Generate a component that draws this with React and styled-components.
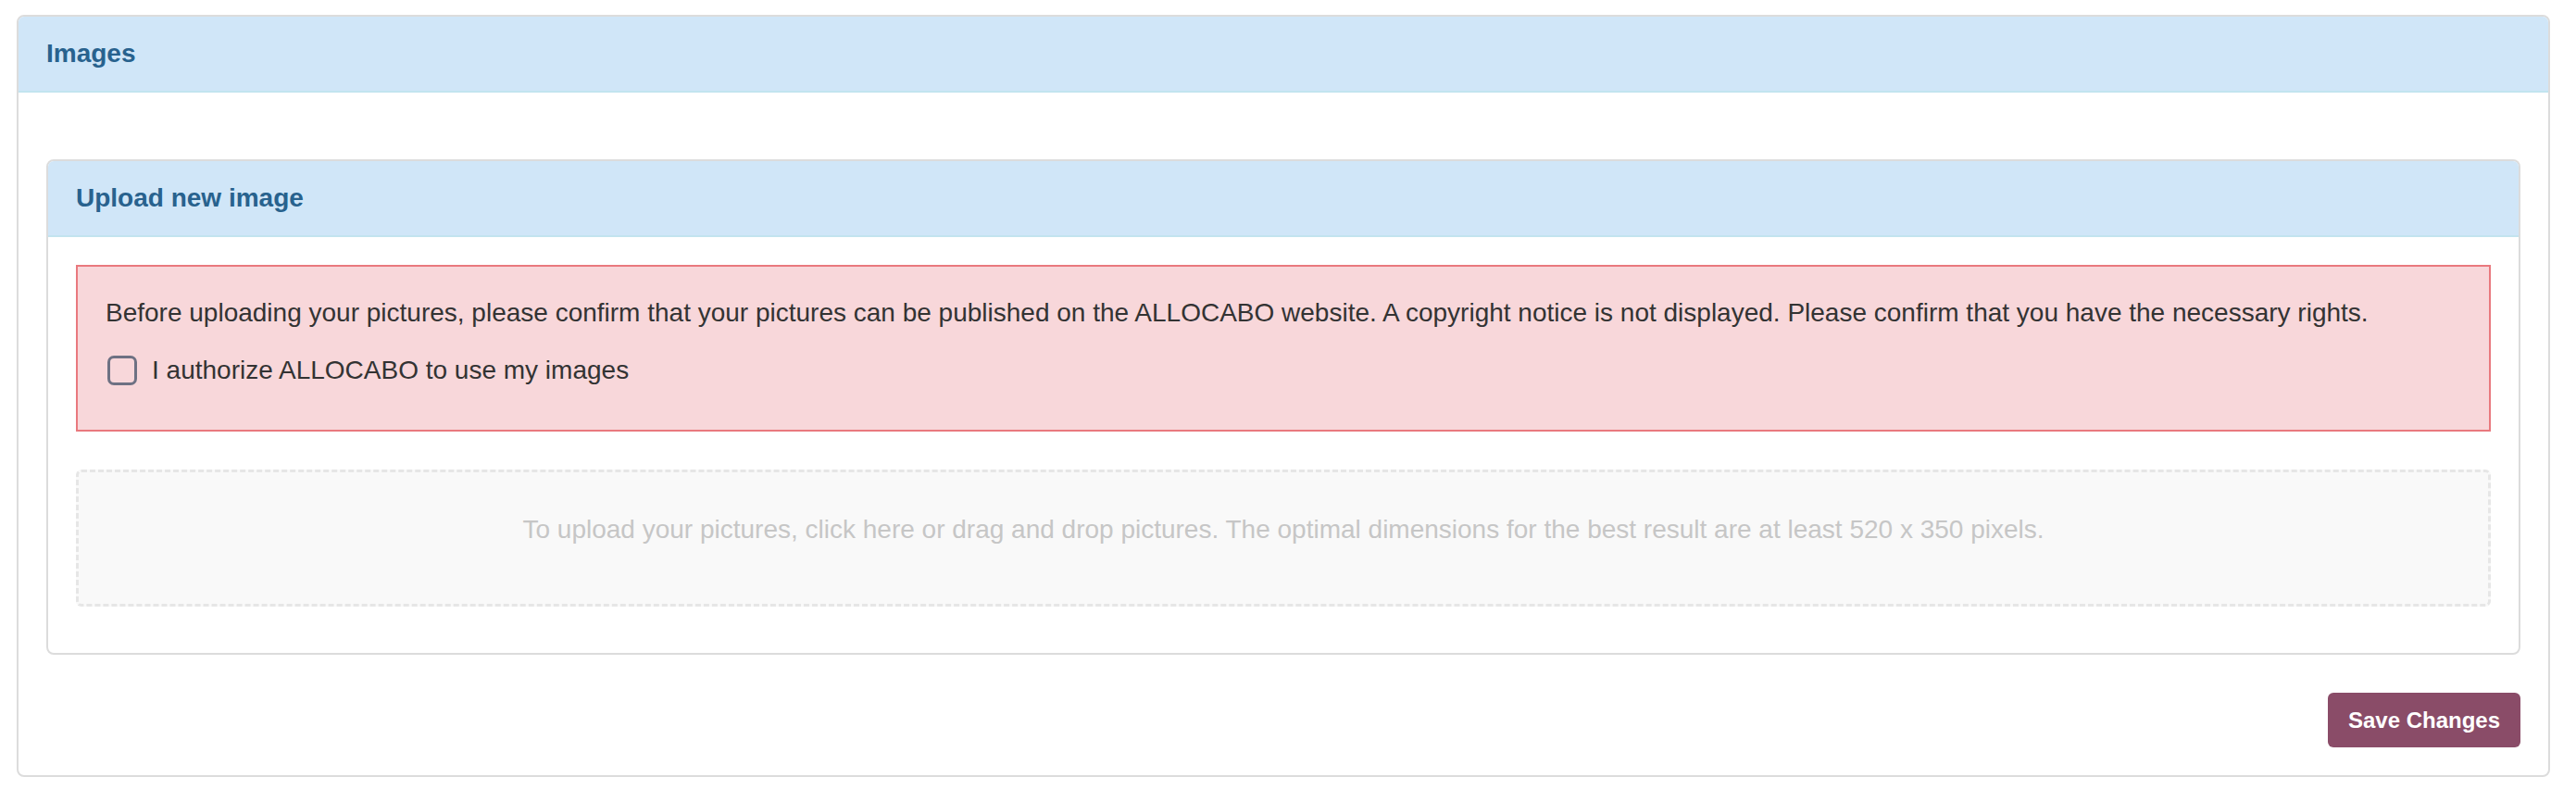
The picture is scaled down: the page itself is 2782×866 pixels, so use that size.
import React from "react";
import styled, { createGlobalStyle } from "styled-components";

const GlobalStyle = createGlobalStyle`
	* {
		box-sizing: border-box;
	}
	body {
		margin: 0;
		background: #fff;
		font-family: "Liberation Sans", Arial, Helvetica, sans-serif;
		color: #333;
	}
`;

const App = () => {
	return (
		<>
			<GlobalStyle />
			<Page>
				<Panel>
					<PanelHeading>
						<PanelTitle>Images</PanelTitle>
					</PanelHeading>
					<OuterBody>
						<Panel>
							<PanelHeading>
								<PanelTitle>Upload new image</PanelTitle>
							</PanelHeading>
							<InnerBody>
								<Alert>
									<AlertText>
										Before uploading your pictures, please confirm that your pictures can be
										published on the ALLOCABO website. A copyright notice is not displayed.
										Please confirm that you have the necessary rights.
									</AlertText>
									<CheckRow>
										<Checkbox type="checkbox" />
										<span>I authorize ALLOCABO to use my images</span>
									</CheckRow>
								</Alert>
								<Dropzone>
									To upload your pictures, click here or drag and drop pictures. The optimal
									dimensions for the best result are at least 520 x 350 pixels.
								</Dropzone>
							</InnerBody>
						</Panel>
						<Actions>
							<SaveButton>Save Changes</SaveButton>
						</Actions>
					</OuterBody>
				</Panel>
			</Page>
		</>
	);
};

// # STYLED COMPONENTS

const Page = styled.div`
	width: 2736px;
	margin: 16px 0 0 18px;
`;

const Panel = styled.section`
	background: #fff;
	border: 2px solid #dcdcdc;
	border-radius: 8px;
	overflow: hidden;
`;

const PanelHeading = styled.div`
	background: #d0e6f8;
	border-bottom: 2px solid #c2e4ef;
	padding: 20px 30px;
`;

const PanelTitle = styled.h3`
	margin: 0;
	font-size: 28px;
	line-height: 40px;
	font-weight: 700;
	color: #28628e;
`;

const OuterBody = styled.div`
	padding: 72px 30px 30px;
`;

const InnerBody = styled.div`
	padding: 30px 30px 50px;
	display: flex;
	flex-direction: column;
	gap: 41px;
`;

const Alert = styled.div`
	background: #f8d7da;
	border: 2px solid #e9797e;
	padding: 30px 30px 44px;
	font-size: 28px;
	line-height: 40px;
	color: #333;
`;

const AlertText = styled.p`
	margin: 0 0 22px;
`;

const CheckRow = styled.label`
	display: flex;
	align-items: center;
	gap: 16px;
	height: 40px;
	padding-left: 2px;
`;

const Checkbox = styled.input`
	appearance: none;
	margin: 0;
	width: 32px;
	height: 32px;
	border: 3px solid #6e7183;
	border-radius: 7px;
	background: transparent;
`;

const Dropzone = styled.div`
	height: 148px;
	background: #f9f9f9;
	border: 3px dashed #e6e6e6;
	border-radius: 6px;
	padding-top: 42px;
	text-align: center;
	font-size: 28px;
	line-height: 40px;
	color: #c6c6c6;
`;

const Actions = styled.div`
	display: flex;
	justify-content: flex-end;
	margin-top: 41px;
`;

const SaveButton = styled.button`
	width: 208px;
	height: 59px;
	border: none;
	border-radius: 6px;
	background: #8a4c68;
	color: #fff;
	font-family: "Liberation Sans", Arial, sans-serif;
	font-size: 24px;
	font-weight: 700;
	cursor: pointer;
`;

export default App;
